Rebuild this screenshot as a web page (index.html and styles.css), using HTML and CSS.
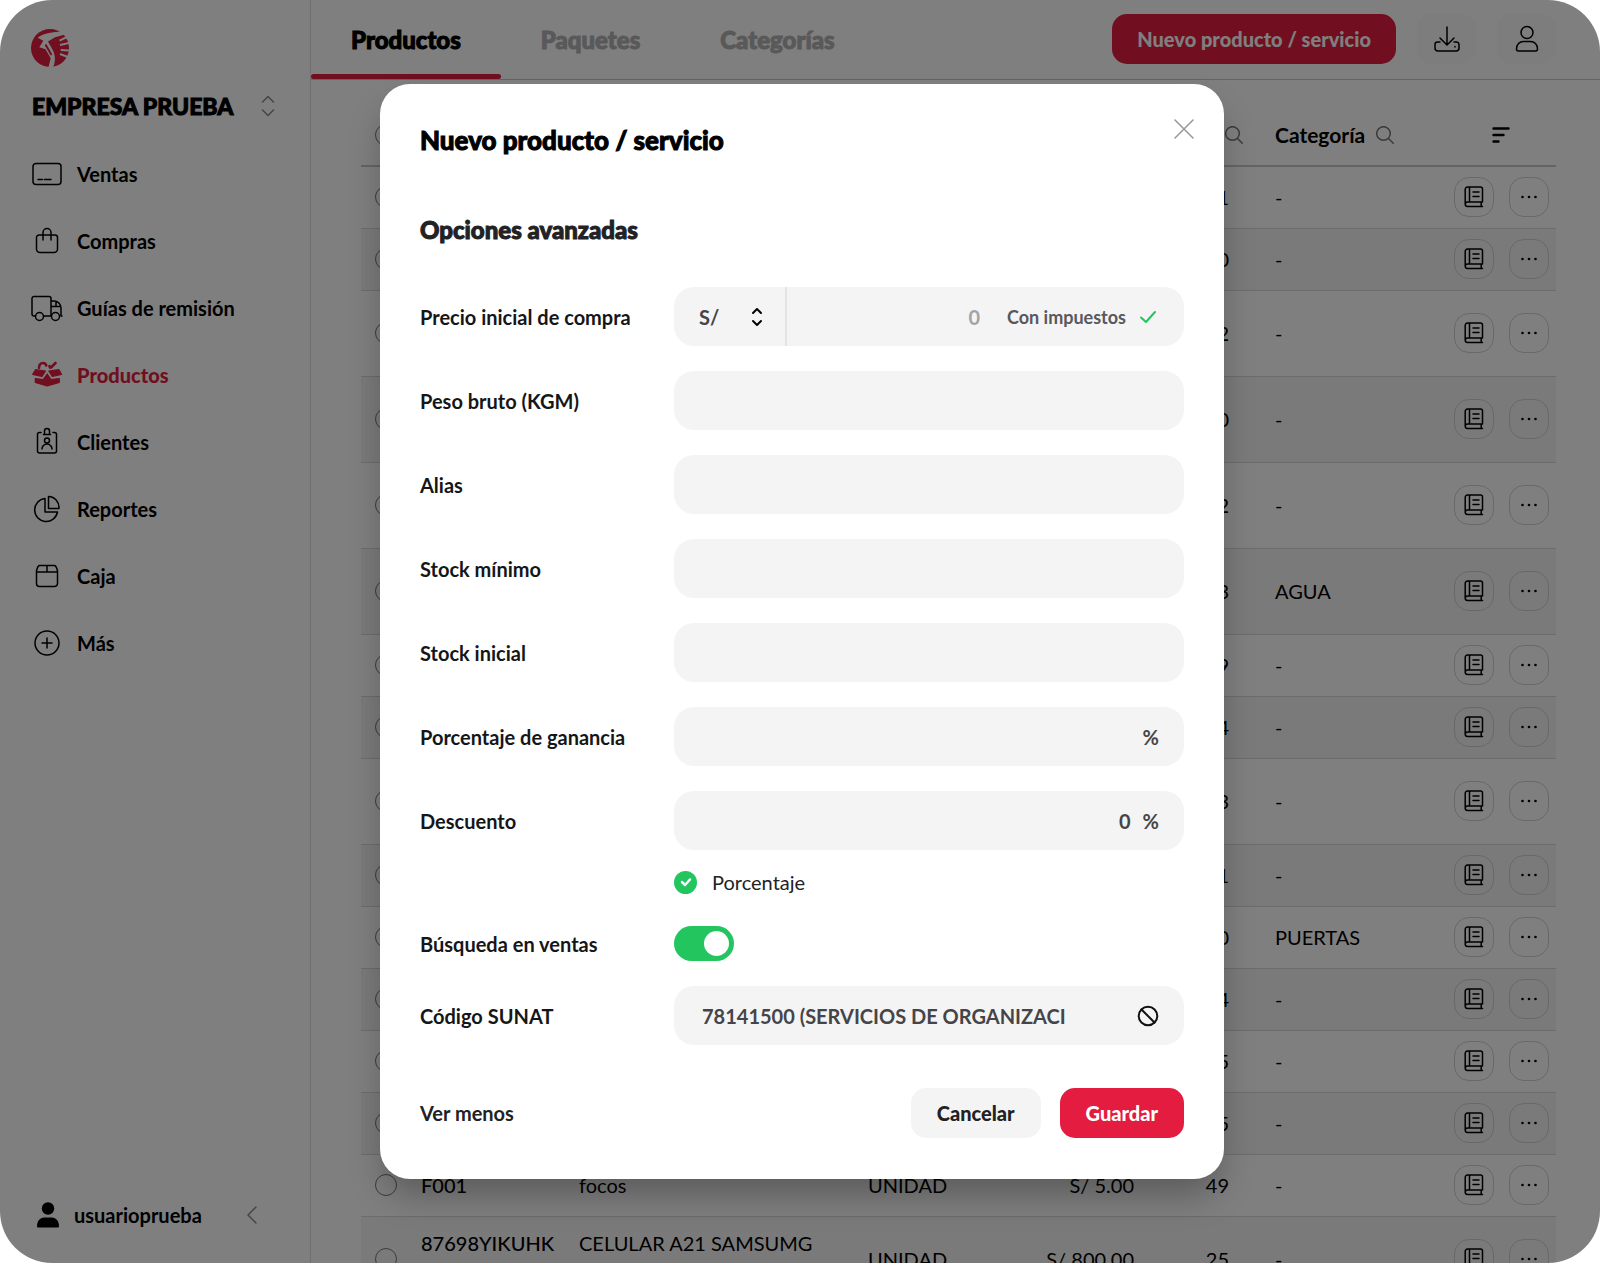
FILE: index.html
```html
<!DOCTYPE html>
<html lang="es">
<head>
<meta charset="utf-8">
<meta name="viewport" content="width=device-width, initial-scale=1">
<title>Productos</title>
<link rel="stylesheet" href="styles.css">
</head>
<body>
<svg class="sprite" aria-hidden="true">
  <symbol id="search" viewBox="0 0 18 18"><circle cx="7.5" cy="7.5" r="6.8"/><path d="M12.5 12.5 17.3 17.3"/></symbol>
  <symbol id="book" viewBox="0 0 20 22"><path d="M3.500 1H16.500a2 2 0 0 1 2 2V16H3.500A2.300 2.300 0 0 0 1.200 18.300V3.300A2.300 2.300 0 0 1 3.500 1ZM1.200 18.300A2.300 2.300 0 0 0 3.500 20.500H18.500M17.200 16v4.500M5.500 1v15M9 6h6M9 10.500h6"/></symbol>
  <symbol id="dots" viewBox="0 0 18 4"><circle cx="2.500" cy="2" r="1.300"/><circle cx="9" cy="2" r="1.300"/><circle cx="15.500" cy="2" r="1.300"/></symbol>
</svg>
<div class="app">
  <aside class="sidebar">
    <a class="logo" href="#" aria-label="Inicio">
      <svg width="38" height="38" viewBox="0 0 38 38"><circle cx="19" cy="19" r="19" fill="#e31c40"/><path d="M31 2.500C22 3 13 4 6.700 8.700L12.300 11.700 8.300 18.300 14.500 20.300 19.700 29.300 17.500 38H22.300C25.500 29 24 24 18.300 15L17 12.500 24 8.300 36 5Z" fill="#fff"/><path d="M37 7.500 28.500 11.700M39 13.700 29 16M39 21.500 29.700 21M37 28 29 25" stroke="#fff" stroke-width="2"/><path d="M14.500 15.500 20.500 26" stroke="#e31c40" stroke-width="2"/></svg>
    </a>
    <button class="company" type="button">EMPRESA PRUEBA
      <svg class="line" width="14" height="22" viewBox="0 0 14 22"><path d="m1.500 7 5.500-5.500L12.500 7M1.500 15l5.500 5.500 5.500-5.500"/></svg>
    </button>
    <nav class="menu">
      <a href="#"><svg class="line" width="32" height="30" viewBox="0 0 32 30"><rect x="2" y="4.500" width="28" height="21" rx="3"/><path d="M7 20.500h4.500M13.500 20.500H20"/></svg>Ventas</a>
      <a href="#"><svg class="line" width="32" height="30" viewBox="0 0 32 30"><path d="M8 9h16a2.500 2.500 0 0 1 2.500 2.500V23a3.500 3.500 0 0 1-3.500 3.500H9A3.500 3.500 0 0 1 5.500 23V11.500A2.500 2.500 0 0 1 8 9ZM12 14V6.500a4 4 0 0 1 8 0V14"/></svg>Compras</a>
      <a href="#"><svg class="line" width="32" height="30" viewBox="0 0 32 30"><path d="M4.500 23H3a2 2 0 0 1-2-2V5.500a2 2 0 0 1 2-2h15a2 2 0 0 1 2 2V23M12.500 23H20M20 8h3.500a7 7 0 0 1 6.500 7v8h1M20 13.500h9.500M25 8.500v5"/><circle cx="8.500" cy="23.500" r="4"/><circle cx="24.500" cy="23.500" r="4"/></svg>Guías de remisión</a>
      <a class="active" href="#"><svg width="32" height="30" viewBox="0 0 32 30"><path d="M8 8C8 5 9.500 3 12 3Q14.500 3 15.300 5.500M20 7.500 24.500 3M19 7.500 18.500 6" fill="none" stroke="currentColor" stroke-width="2.600" stroke-linecap="round"/><path d="M4.500 9.700 14.500 11 11 16.500 1.700 14.300ZM28 9.700 17.800 11 21.300 16.500 30.500 14.300ZM4.300 18.500 12.300 19.500 16.200 14 20 19.500 28.300 18.500V22.500L16.200 26 4.300 22.500Z" fill="currentColor" stroke="currentColor" stroke-width="1.200" stroke-linejoin="round"/></svg>Productos</a>
      <a href="#"><svg class="line" width="32" height="30" viewBox="0 0 32 30"><path d="M10 5.500H8.500a2 2 0 0 0-2 2v16.500a2 2 0 0 0 2 2h15a2 2 0 0 0 2-2V7.500a2 2 0 0 0-2-2H22M12.500 7.500h7M13.500 7V4a2.500 2.500 0 0 1 5 0v3M11 22a5 5 0 0 1 10 0"/><circle cx="16" cy="13.500" r="2.500"/></svg>Clientes</a>
      <a href="#"><svg class="line" width="32" height="30" viewBox="0 0 32 30"><path d="M14 4.500A11.500 11.500 0 1 0 26.500 18H14ZM17.500 2.500A11 11 0 0 1 28 14.500H17.500Z"/></svg>Reportes</a>
      <a href="#"><svg class="line" width="32" height="30" viewBox="0 0 32 30"><path d="M8.500 4.500h15Q25.500 5 26.500 10v12.500a3 3 0 0 1-3 3h-15a3 3 0 0 1-3-3V10Q6.500 5 8.500 4.500ZM5.500 11h21M16 4.500V11"/></svg>Caja</a>
      <a href="#"><svg class="line" width="32" height="30" viewBox="0 0 32 30"><circle cx="16" cy="15" r="12"/><path d="M16 10v10M11 15h10"/></svg>Más</a>
    </nav>
    <div class="user">
      <svg width="24" height="26" viewBox="0 0 24 26"><circle cx="12" cy="6.500" r="6.200"/><path d="M1 24.500c0-5.500 3-9 7-9h8c4 0 7 3.500 7 9q0 1-1 1H2q-1 0-1-1Z"/></svg>
      <span>usuarioprueba</span>
      <button type="button" aria-label="Contraer"><svg class="line" width="12" height="18" viewBox="0 0 12 18"><path d="M10 1 2 9l8 8"/></svg></button>
    </div>
  </aside>

  <main class="main">
    <header class="topbar">
      <nav class="tabs">
        <a class="current" href="#">Productos</a>
        <a href="#">Paquetes</a>
        <a href="#">Categorías</a>
      </nav>
      <div class="tools">
        <button class="btn btn-primary" type="button">Nuevo producto / servicio</button>
        <button class="tool" type="button" aria-label="Descargar"><svg class="line" width="28" height="28" viewBox="0 0 28 28"><path d="M14 2v17M7 13l7 7 7-7M7 17H4.500A2.500 2.500 0 0 0 2 19.500V23a3 3 0 0 0 3 3h18a3 3 0 0 0 3-3v-3.500a2.500 2.500 0 0 0-2.500-2.500H21M22 21.500v.5"/></svg></button>
        <button class="tool" type="button" aria-label="Cuenta"><svg class="line" width="28" height="28" viewBox="0 0 28 28"><circle cx="14" cy="7.500" r="6"/><path d="M3.500 24c0-4.500 3-7.500 7-7.500h7c4 0 7 3 7 7.500q0 2-2 2h-17q-2 0-2-2Z"/></svg></button>
      </div>
    </header>

    <div class="content">
      <table class="products">
        <colgroup><col class="c-check"><col class="c-code"><col class="c-name"><col class="c-unit"><col class="c-price"><col class="c-stock"><col><col class="c-actions"></colgroup>
        <thead>
          <tr><th><input class="pick" type="checkbox" aria-label="Todos"></th><th></th><th></th><th></th><th></th><th class="stock-head"><svg class="line" width="18" height="18"><use href="#search"/></svg></th><th class="cat"><span class="head">Categoría <svg class="line" width="18" height="18"><use href="#search"/></svg></span></th><th class="sort"><button type="button" aria-label="Ordenar"><svg width="18" height="16" viewBox="0 0 18 16"><path d="M1.500 1.500h15M1.500 8h10M1.500 14.500h5" stroke="#000" stroke-width="2.400" stroke-linecap="round"/></svg></button></th></tr>
        </thead>
        <tbody>
          <tr><td><input class="pick" type="checkbox" aria-label="Elegir"></td><td></td><td></td><td></td><td></td><td class="stock">1</td><td class="cat">-</td><td class="actions"><div><button type="button" aria-label="Kardex"><svg class="line" width="20" height="22"><use href="#book"/></svg></button><button type="button" aria-label="Opciones"><svg width="18" height="4"><use href="#dots"/></svg></button></div></td></tr>
          <tr><td><input class="pick" type="checkbox" aria-label="Elegir"></td><td></td><td></td><td></td><td></td><td class="stock">0</td><td class="cat">-</td><td class="actions"><div><button type="button" aria-label="Kardex"><svg class="line" width="20" height="22"><use href="#book"/></svg></button><button type="button" aria-label="Opciones"><svg width="18" height="4"><use href="#dots"/></svg></button></div></td></tr>
          <tr class="tall"><td><input class="pick" type="checkbox" aria-label="Elegir"></td><td></td><td></td><td></td><td></td><td class="stock">2</td><td class="cat">-</td><td class="actions"><div><button type="button" aria-label="Kardex"><svg class="line" width="20" height="22"><use href="#book"/></svg></button><button type="button" aria-label="Opciones"><svg width="18" height="4"><use href="#dots"/></svg></button></div></td></tr>
          <tr class="tall"><td><input class="pick" type="checkbox" aria-label="Elegir"></td><td></td><td></td><td></td><td></td><td class="stock">0</td><td class="cat">-</td><td class="actions"><div><button type="button" aria-label="Kardex"><svg class="line" width="20" height="22"><use href="#book"/></svg></button><button type="button" aria-label="Opciones"><svg width="18" height="4"><use href="#dots"/></svg></button></div></td></tr>
          <tr class="tall"><td><input class="pick" type="checkbox" aria-label="Elegir"></td><td></td><td></td><td></td><td></td><td class="stock">2</td><td class="cat">-</td><td class="actions"><div><button type="button" aria-label="Kardex"><svg class="line" width="20" height="22"><use href="#book"/></svg></button><button type="button" aria-label="Opciones"><svg width="18" height="4"><use href="#dots"/></svg></button></div></td></tr>
          <tr class="tall"><td><input class="pick" type="checkbox" aria-label="Elegir"></td><td></td><td></td><td></td><td></td><td class="stock">3</td><td class="cat">AGUA</td><td class="actions"><div><button type="button" aria-label="Kardex"><svg class="line" width="20" height="22"><use href="#book"/></svg></button><button type="button" aria-label="Opciones"><svg width="18" height="4"><use href="#dots"/></svg></button></div></td></tr>
          <tr><td><input class="pick" type="checkbox" aria-label="Elegir"></td><td></td><td></td><td></td><td></td><td class="stock">9</td><td class="cat">-</td><td class="actions"><div><button type="button" aria-label="Kardex"><svg class="line" width="20" height="22"><use href="#book"/></svg></button><button type="button" aria-label="Opciones"><svg width="18" height="4"><use href="#dots"/></svg></button></div></td></tr>
          <tr><td><input class="pick" type="checkbox" aria-label="Elegir"></td><td></td><td></td><td></td><td></td><td class="stock">4</td><td class="cat">-</td><td class="actions"><div><button type="button" aria-label="Kardex"><svg class="line" width="20" height="22"><use href="#book"/></svg></button><button type="button" aria-label="Opciones"><svg width="18" height="4"><use href="#dots"/></svg></button></div></td></tr>
          <tr class="tall"><td><input class="pick" type="checkbox" aria-label="Elegir"></td><td></td><td></td><td></td><td></td><td class="stock">3</td><td class="cat">-</td><td class="actions"><div><button type="button" aria-label="Kardex"><svg class="line" width="20" height="22"><use href="#book"/></svg></button><button type="button" aria-label="Opciones"><svg width="18" height="4"><use href="#dots"/></svg></button></div></td></tr>
          <tr><td><input class="pick" type="checkbox" aria-label="Elegir"></td><td></td><td></td><td></td><td></td><td class="stock">1</td><td class="cat">-</td><td class="actions"><div><button type="button" aria-label="Kardex"><svg class="line" width="20" height="22"><use href="#book"/></svg></button><button type="button" aria-label="Opciones"><svg width="18" height="4"><use href="#dots"/></svg></button></div></td></tr>
          <tr><td><input class="pick" type="checkbox" aria-label="Elegir"></td><td></td><td></td><td></td><td></td><td class="stock">0</td><td class="cat">PUERTAS</td><td class="actions"><div><button type="button" aria-label="Kardex"><svg class="line" width="20" height="22"><use href="#book"/></svg></button><button type="button" aria-label="Opciones"><svg width="18" height="4"><use href="#dots"/></svg></button></div></td></tr>
          <tr><td><input class="pick" type="checkbox" aria-label="Elegir"></td><td></td><td></td><td></td><td></td><td class="stock">4</td><td class="cat">-</td><td class="actions"><div><button type="button" aria-label="Kardex"><svg class="line" width="20" height="22"><use href="#book"/></svg></button><button type="button" aria-label="Opciones"><svg width="18" height="4"><use href="#dots"/></svg></button></div></td></tr>
          <tr><td><input class="pick" type="checkbox" aria-label="Elegir"></td><td></td><td></td><td></td><td></td><td class="stock">5</td><td class="cat">-</td><td class="actions"><div><button type="button" aria-label="Kardex"><svg class="line" width="20" height="22"><use href="#book"/></svg></button><button type="button" aria-label="Opciones"><svg width="18" height="4"><use href="#dots"/></svg></button></div></td></tr>
          <tr><td><input class="pick" type="checkbox" aria-label="Elegir"></td><td></td><td></td><td></td><td></td><td class="stock">5</td><td class="cat">-</td><td class="actions"><div><button type="button" aria-label="Kardex"><svg class="line" width="20" height="22"><use href="#book"/></svg></button><button type="button" aria-label="Opciones"><svg width="18" height="4"><use href="#dots"/></svg></button></div></td></tr>
          <tr><td><input class="pick" type="checkbox" aria-label="Elegir F001"></td><td class="code">F001</td><td>focos</td><td>UNIDAD</td><td class="price">S/ 5.00</td><td class="stock">49</td><td class="cat">-</td><td class="actions"><div><button type="button" aria-label="Kardex"><svg class="line" width="20" height="22"><use href="#book"/></svg></button><button type="button" aria-label="Opciones"><svg width="18" height="4"><use href="#dots"/></svg></button></div></td></tr>
          <tr class="tall"><td><input class="pick" type="checkbox" aria-label="Elegir 87698YIKUHK"></td><td class="code top">87698YIKUHK</td><td class="top">CELULAR A21 SAMSUMG</td><td>UNIDAD</td><td class="price">S/ 800.00</td><td class="stock">25</td><td class="cat">-</td><td class="actions"><div><button type="button" aria-label="Kardex"><svg class="line" width="20" height="22"><use href="#book"/></svg></button><button type="button" aria-label="Opciones"><svg width="18" height="4"><use href="#dots"/></svg></button></div></td></tr>
        </tbody>
      </table>
    </div>
  </main>

  <div class="overlay">
    <form class="modal" role="dialog" aria-modal="true" aria-labelledby="modal-title">
      <div class="modal-head">
        <h1 id="modal-title">Nuevo producto / servicio</h1>
        <button type="button" aria-label="Cerrar"><svg class="line" width="20" height="20" viewBox="0 0 20 20"><path d="m1 1 18 18M19 1 1 19"/></svg></button>
      </div>
      <h2>Opciones avanzadas</h2>
      <div class="fields">
        <label for="precio">Precio inicial de compra</label>
        <div class="field field-price">
          <div class="currency">
            <select aria-label="Moneda"><option>S/</option></select>
            <svg class="line" width="12" height="20" viewBox="0 0 12 20"><path d="m2 6 4-4 4 4M2 14l4 4 4-4"/></svg>
          </div>
          <input id="precio" type="text" placeholder="0">
          <button class="tax" type="button">Con impuestos
            <svg class="line" width="18" height="14" viewBox="0 0 18 14"><path d="m2 7.500 5 4.500L16 2"/></svg>
          </button>
        </div>

        <label for="peso">Peso bruto (KGM)</label>
        <div class="field"><input id="peso" type="text"></div>

        <label for="alias">Alias</label>
        <div class="field"><input id="alias" type="text"></div>

        <label for="stock-min">Stock mínimo</label>
        <div class="field"><input id="stock-min" type="text"></div>

        <label for="stock-ini">Stock inicial</label>
        <div class="field"><input id="stock-ini" type="text"></div>

        <label for="ganancia">Porcentaje de ganancia</label>
        <div class="field field-num"><input id="ganancia" type="text"><span>%</span></div>

        <label for="descuento">Descuento</label>
        <div class="field field-num"><input id="descuento" type="text" value="0"><span>%</span></div>
      </div>

      <div class="percent">
        <span class="tick"><input id="porcentaje" type="checkbox" checked><svg width="12" height="10" viewBox="0 0 12 10"><path d="m2 5 3 3 5-5.500"/></svg></span>
        <label for="porcentaje">Porcentaje</label>
      </div>

      <div class="fields">
        <label for="busqueda">Búsqueda en ventas</label>
        <input class="switch" id="busqueda" type="checkbox" role="switch" checked>

        <label for="sunat">Código SUNAT</label>
        <div class="field field-sunat">
          <input id="sunat" type="text" value="78141500 (SERVICIOS DE ORGANIZACI">
          <button type="button" aria-label="Quitar"><svg class="line" width="22" height="22" viewBox="0 0 22 22"><circle cx="11" cy="11" r="9.300"/><path d="m4.500 4.500 13 13"/></svg></button>
        </div>
      </div>

      <div class="modal-foot">
        <button class="less" type="button">Ver menos</button>
        <button class="btn btn-plain" type="button">Cancelar</button>
        <button class="btn btn-primary" type="submit">Guardar</button>
      </div>
    </form>
  </div>
</div>
</body>
</html>
```
FILE: styles.css
```css
*, *::before, *::after { box-sizing: border-box; }

:root {
  --red: #e31c40;
  --green: #22c55e;
  --field: #f4f4f4;
  --ink: #222225;
  --line: #dedede;
}

body {
  margin: 0;
  background: #fff;
  color: #000;
  font: 400 20px/24px Lato, "Open Sans", sans-serif;
}

button, input, select { font: inherit; color: inherit; }
button { padding: 0; border: 0; background: none; cursor: pointer; }
a { color: inherit; text-decoration: none; }
svg { display: block; flex: none; }
h1, h2 { margin: 0; font-weight: 900; }

h1, h2, .company, .tabs { -webkit-text-stroke: 1px currentColor; }

.sprite { position: absolute; width: 0; height: 0; }

.line {
  fill: none;
  stroke: currentColor;
  stroke-width: 1.5;
  stroke-linecap: round;
  stroke-linejoin: round;
}

.app {
  position: relative;
  display: grid;
  grid-template-columns: 311px 1fr;
  height: 100vh;
  overflow: hidden;
  border-radius: 52px;
}

/* Sidebar */
.sidebar {
  display: flex;
  flex-direction: column;
  padding: 29px 30px 35px 31px;
  border-right: 1px solid var(--line);
}

.logo { width: 38px; }

.company {
  display: flex;
  align-items: center;
  justify-content: space-between;
  height: 30px;
  margin: 24px 5px 19px 1px;
  font-size: 23px;
  font-weight: 900;
}

.company svg, .user button { color: #8a8a8a; }

.menu a {
  display: flex;
  align-items: center;
  gap: 14px;
  height: 67px;
  font-weight: 700;
}

.menu .active { color: var(--red); font-weight: 900; }

.user {
  display: flex;
  align-items: center;
  gap: 14px;
  margin-top: auto;
  padding-left: 5px;
  font-weight: 700;
}

.user button { margin: 0 22px 0 auto; }

/* Top bar */
.main { display: flex; flex-direction: column; min-width: 0; overflow: hidden; }

.topbar {
  display: flex;
  align-items: stretch;
  justify-content: space-between;
  flex: none;
  height: 80px;
  padding-right: 44px;
  border-bottom: 1px solid #c8c8c8;
}

.tabs { display: flex; font-size: 24px; font-weight: 900; color: #b2b2b2; }

.tabs a {
  padding: 28px 40px 0;
  border-bottom: 5px solid transparent;
}

.tabs .current { position: relative; color: #000; }

.tabs .current::after {
  content: "";
  position: absolute;
  inset: auto 0 -5px;
  height: 5px;
  border-radius: 3px;
  background: var(--red);
}

.tools { display: flex; align-items: center; gap: 21px; padding-bottom: 2px; }

.tool {
  display: grid;
  place-items: center;
  width: 59px;
  height: 50px;
  border-radius: 14px;
  background: #fafafa;
}

.btn {
  height: 50px;
  padding: 0 25px;
  border-radius: 15px;
  font-weight: 900;
}

.btn-primary { background: var(--red); color: #fff; }
.btn-plain { background: var(--field); color: var(--ink); }

/* Table */
.content { padding: 24px 44px 0 50px; }

.products {
  width: 100%;
  table-layout: fixed;
  border-collapse: collapse;
}

.c-check { width: 60px; }
.c-code { width: 158px; }
.c-name { width: 289px; }
.c-unit { width: 150px; }
.c-price { width: 116px; }
.c-stock { width: 109px; }
.c-actions { width: 140px; }

.products th, .products td {
  height: 62px;
  padding: 0;
  border-bottom: 1px solid #d8d8d8;
  text-align: left;
  white-space: nowrap;
}

.products th { border-bottom: 2px solid #c8c8c8; font-size: 21px; font-weight: 700; }
.products .tall td { height: 86px; }
.products tbody tr:nth-child(even) { background: #f5f5f5; }
.products .code { font-weight: 500; }
.products .tall .top { padding-top: 14px; vertical-align: top; }
.products .price { text-align: right; }
.products .stock { padding-right: 14px; text-align: right; }
.products .cat { padding-left: 32px; }
.stock-head svg { margin-left: auto; }
.products th svg { color: #777; }
.head { display: flex; align-items: center; gap: 11px; }
.sort button { display: block; margin: 0 46px 0 auto; }

.pick {
  appearance: none;
  display: block;
  width: 22px;
  height: 22px;
  margin: 0 0 0 14px;
  border: 1px solid #777;
  border-radius: 50%;
}

.actions div { display: flex; justify-content: flex-end; gap: 15px; padding-right: 7px; }

.actions button {
  display: grid;
  place-items: center;
  width: 40px;
  height: 40px;
  border: 1px solid #d0d0d0;
  border-radius: 15px;
}

/* Modal */
.overlay {
  position: absolute;
  inset: 0;
  display: flex;
  align-items: center;
  justify-content: center;
  padding-left: 4px;
  background: rgb(0 0 0 / 50%);
}

.modal {
  width: 844px;
  max-width: 100%;
  padding: 35px 40px 41px;
  border-radius: 30px;
  background: #fff;
  box-shadow: 0 20px 36px -6px rgb(0 0 0 / 30%);
}

.modal-head { display: flex; justify-content: space-between; }
.modal-head h1 { padding-top: 5px; font-size: 26px; line-height: 32px; }
.modal-head button { width: 20px; height: 20px; margin-right: -10px; color: #96969c; }
.modal h2 { margin: 60px 0 43px; font-size: 24px; line-height: 28px; color: var(--ink); }

.fields {
  display: grid;
  grid-template-columns: 254px 1fr;
  align-items: center;
  row-gap: 25px;
  font-weight: 700;
}

.fields label { color: #161618; }

.field {
  display: flex;
  align-items: center;
  height: 59px;
  border-radius: 20px;
  background: var(--field);
  color: #454549;
  overflow: hidden;
}

.field input {
  flex: 1;
  min-width: 0;
  height: 100%;
  padding: 0 28px;
  border: 0;
  outline: 0;
  background: none;
}

.field-price input { padding: 0 27px 0 0; text-align: right; }
.field-price input::placeholder { color: #a3a3a9; opacity: 1; }

.currency {
  display: flex;
  align-items: center;
  width: 113px;
  height: 100%;
  padding-right: 22px;
  border-right: 2px solid #e4e4e6;
}

.currency select {
  appearance: none;
  flex: 1;
  min-width: 0;
  height: 100%;
  padding: 0 0 0 25px;
  border: 0;
  outline: 0;
  background: none;
}

.currency svg { color: #000; stroke-width: 2; }

.tax {
  display: flex;
  align-items: center;
  gap: 13px;
  margin-right: 27px;
  font-size: 18px;
  font-weight: 700;
  color: #58585e;
}

.tax svg { color: var(--green); stroke-width: 2; }

.field-num input { padding: 0 12px 0 28px; text-align: right; }
.field-num span { margin-right: 25px; }
.field-sunat button { margin-right: 25px; color: #111; }
.field-sunat svg { stroke-width: 2; }

.percent {
  display: flex;
  align-items: center;
  gap: 15px;
  margin: 20px 0 32px 254px;
  color: var(--ink);
}

.tick { display: grid; place-items: center; }
.tick > * { grid-area: 1 / 1; }

.tick input {
  appearance: none;
  width: 23px;
  height: 23px;
  margin: 0;
  border-radius: 50%;
  background: var(--green);
}

.tick svg {
  z-index: 1;
  fill: none;
  stroke: #fff;
  stroke-width: 2.5;
  stroke-linecap: round;
  stroke-linejoin: round;
  pointer-events: none;
}

.switch {
  appearance: none;
  display: flex;
  align-items: center;
  justify-content: flex-end;
  width: 60px;
  height: 35px;
  margin: 0;
  padding: 5px;
  border-radius: 18px;
  background: var(--green);
}

.switch::before {
  content: "";
  width: 25px;
  height: 25px;
  border-radius: 50%;
  background: #fff;
}

.modal-foot { display: flex; align-items: center; gap: 19px; margin-top: 43px; }
.modal-foot .btn { padding: 0 26px; }
.less { margin-right: auto; font-weight: 700; color: var(--ink); }
```
